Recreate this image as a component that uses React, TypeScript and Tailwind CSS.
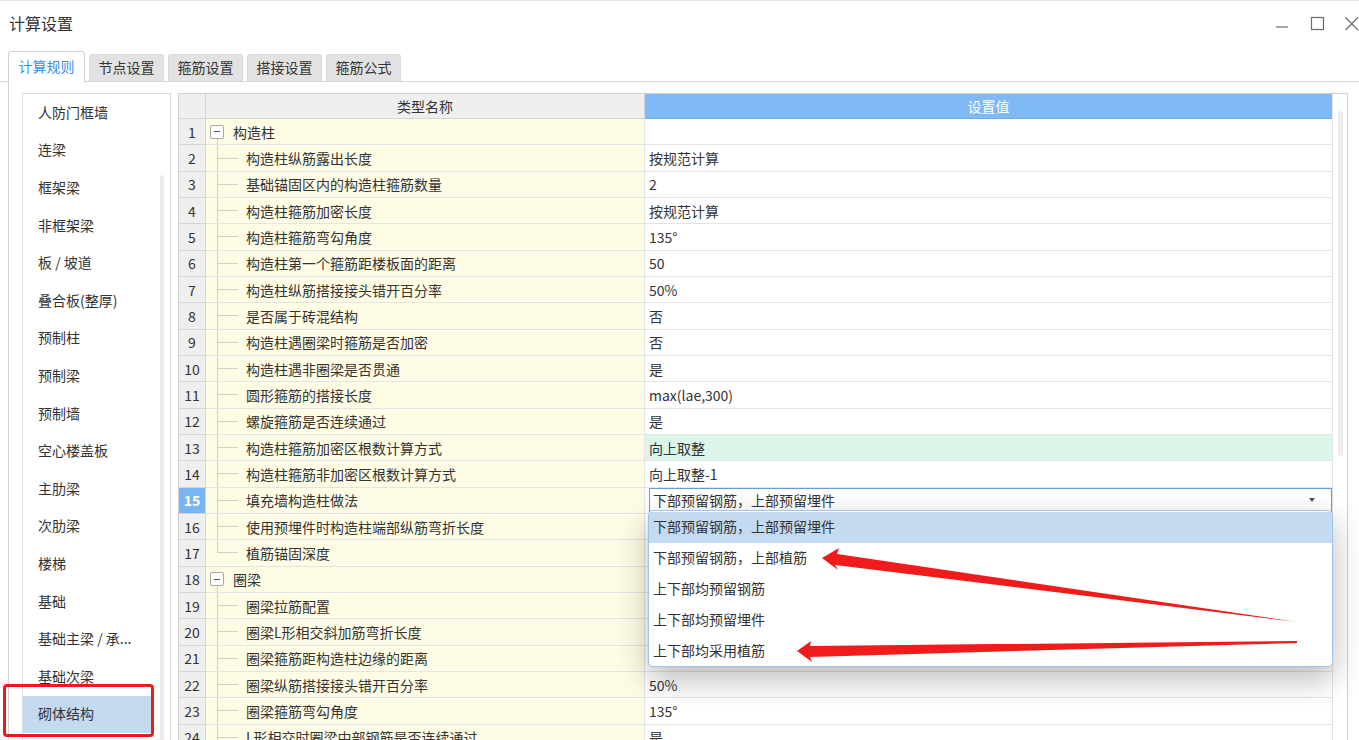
import React from 'react';

type Row = {
  n: number;
  name: string;
  value?: string;
  group?: boolean;
  last?: boolean;
  green?: boolean;
  combo?: boolean;
};

const ROWS: Row[] = [
  { n: 1, name: '构造柱', group: true, value: '' },
  { n: 2, name: '构造柱纵筋露出长度', value: '按规范计算' },
  { n: 3, name: '基础锚固区内的构造柱箍筋数量', value: '2' },
  { n: 4, name: '构造柱箍筋加密长度', value: '按规范计算' },
  { n: 5, name: '构造柱箍筋弯勾角度', value: '135°' },
  { n: 6, name: '构造柱第一个箍筋距楼板面的距离', value: '50' },
  { n: 7, name: '构造柱纵筋搭接接头错开百分率', value: '50%' },
  { n: 8, name: '是否属于砖混结构', value: '否' },
  { n: 9, name: '构造柱遇圈梁时箍筋是否加密', value: '否' },
  { n: 10, name: '构造柱遇非圈梁是否贯通', value: '是' },
  { n: 11, name: '圆形箍筋的搭接长度', value: 'max(lae,300)' },
  { n: 12, name: '螺旋箍筋是否连续通过', value: '是' },
  { n: 13, name: '构造柱箍筋加密区根数计算方式', value: '向上取整', green: true },
  { n: 14, name: '构造柱箍筋非加密区根数计算方式', value: '向上取整-1' },
  { n: 15, name: '填充墙构造柱做法', value: '下部预留钢筋，上部预留埋件', combo: true },
  { n: 16, name: '使用预埋件时构造柱端部纵筋弯折长度', value: '10d' },
  { n: 17, name: '植筋锚固深度', value: '10d', last: true },
  { n: 18, name: '圈梁', group: true, value: '' },
  { n: 19, name: '圈梁拉筋配置', value: '按规范计算' },
  { n: 20, name: '圈梁L形相交斜加筋弯折长度', value: '10*d' },
  { n: 21, name: '圈梁箍筋距构造柱边缘的距离', value: '50' },
  { n: 22, name: '圈梁纵筋搭接接头错开百分率', value: '50%' },
  { n: 23, name: '圈梁箍筋弯勾角度', value: '135°' },
  { n: 24, name: 'L形相交时圈梁中部钢筋是否连续通过', value: '是' },
];

const LIST = [
  '人防门框墙',
  '连梁',
  '框架梁',
  '非框架梁',
  '板 / 坡道',
  '叠合板(整厚)',
  '预制柱',
  '预制梁',
  '预制墙',
  '空心楼盖板',
  '主肋梁',
  '次肋梁',
  '楼梯',
  '基础',
  '基础主梁 / 承...',
  '基础次梁',
  '砌体结构',
];

const TABS = ['计算规则', '节点设置', '箍筋设置', '搭接设置', '箍筋公式'];

const OPTIONS = ['下部预留钢筋，上部预留埋件', '下部预留钢筋，上部植筋', '上下部均预留钢筋', '上下部均预留埋件', '上下部均采用植筋'];

function NameCell({ row }: { row: Row }) {
  if (row.group) {
    return (
      <div className="flex items-stretch h-full pl-[4px]">
        <div className="w-[14px] flex flex-col items-center">
          <div className="flex-1" />
          <div className="w-[14px] h-[14px] border border-[#a9a9a9] rounded-[2px] bg-white flex items-center justify-center">
            <div className="w-[6px] h-px bg-[#555]" />
          </div>
          <div className="flex-1 w-0 border-l border-[#cfcfcf]" />
        </div>
        <div className="ml-[9px] flex items-center">{row.name}</div>
      </div>
    );
  }
  return (
    <div className="flex items-stretch h-full pl-[11px]">
      <div className="w-[21px] flex flex-col">
        <div className="flex-1 border-l border-b border-[#cfcfcf]" />
        <div className={row.last ? 'flex-1' : 'flex-1 border-l border-[#cfcfcf]'} />
      </div>
      <div className="ml-[8px] flex items-center">{row.name}</div>
    </div>
  );
}

function GridRow({ row }: { row: Row }) {
  const sel = row.combo;
  return (
    <div className="flex h-[26.33px]">
      <div
        className={
          sel
            ? 'w-[27px] shrink-0 bg-[#78b5f5] text-white font-bold border-r border-b border-[#d4d4d4] flex items-center justify-center'
            : 'w-[27px] shrink-0 bg-[#efefef] border-r border-b border-[#d4d4d4] flex items-center justify-center'
        }
      >
        {row.n}
      </div>
      <div className="w-[439px] shrink-0 bg-[#fffce6] border-r border-b border-[#e4e4e4]">
        <NameCell row={row} />
      </div>
      <div
        className={
          row.green
            ? 'flex-1 bg-[#dcf5e9] border-b border-[#e4e4e4] flex items-center pl-[4px]'
            : 'flex-1 bg-white border-b border-[#e4e4e4] flex items-center pl-[4px]'
        }
      >
        {sel ? (
          <div className="w-full h-full border border-[#5c9fe6] flex items-center pl-[3px] pr-[16px] justify-between bg-white">
            <span>{row.value}</span>
            <svg width="6" height="4" viewBox="0 0 6 4">
              <path d="M0 0 L6 0 L3 4 Z" fill="#555" />
            </svg>
          </div>
        ) : (
          row.value
        )}
      </div>
    </div>
  );
}

export default function App() {
  return (
    <div className="w-[1359px] h-[740px] overflow-hidden bg-white relative border-t border-[#e6e6e6] text-[14px] text-[#333] leading-none font-['Microsoft_YaHei','Noto_Sans_CJK_SC',sans-serif]">
      {/* title bar */}
      <div className="h-[48px] flex items-center justify-between pl-[9px]">
        <div className="text-[16px] text-[#333] pb-[4px]">计算设置</div>
        <svg width="90" height="48" viewBox="0 0 90 48">
          <line x1="7" y1="26" x2="19" y2="26" stroke="#6b6b6b" strokeWidth="1.2" />
          <rect x="42.5" y="16.5" width="12" height="12" fill="none" stroke="#6b6b6b" strokeWidth="1.2" />
          <path d="M76.5 16.5 L89 29 M89 16.5 L76.5 29" stroke="#6b6b6b" strokeWidth="1.2" />
        </svg>
      </div>

      {/* tabs */}
      <div className="h-[33px] flex items-end pl-[8px] gap-[4px] border-b border-[#d6d6d6]">
        {TABS.map((t, i) =>
          i === 0 ? (
            <div
              key={t}
              className="w-[77px] h-[31px] -mb-px bg-white border border-b-0 border-[#d0d0d0] rounded-t-[3px] flex items-center justify-center pb-[3px] text-[#3b8ee4]"
            >
              {t}
            </div>
          ) : (
            <div
              key={t}
              className="w-[75px] h-[27px] bg-[#e2e2e2] border border-b-0 border-[#dadada] rounded-t-[3px] flex items-center justify-center pb-[3px] text-[#333]"
            >
              {t}
            </div>
          )
        )}
      </div>

      {/* content */}
      <div className="ml-[8px] border-l border-[#d6d6d6] h-[700px] flex gap-[7px] pl-[13px] pt-[11px]">
        {/* left list */}
        <div className="w-[149px] h-[700px] border border-[#dcdcdc] flex shrink-0">
          <div className="w-[128px] flex flex-col">
            {LIST.map((l, i) => (
              <div
                key={l}
                className={
                  i === LIST.length - 1
                    ? 'h-[37.6px] shrink-0 flex items-center pl-[15px] pb-[2px] bg-[#c4daf1]'
                    : 'h-[37.6px] shrink-0 flex items-center pl-[15px] pb-[2px]'
                }
              >
                {l}
              </div>
            ))}
          </div>
          <div className="flex-1 flex justify-center pt-[81px] pl-[3px]">
            <div className="w-[4px] h-[620px] bg-[#ececec] rounded-full" />
          </div>
        </div>

        {/* grid */}
        <div className="relative w-[1170px] h-[700px] border border-[#d0d0d0] flex">
          <div className="flex-1 flex flex-col">
            <div className="flex h-[25px] shrink-0">
              <div className="w-[27px] bg-[#efefef] border-r border-b border-[#d4d4d4]" />
              <div className="w-[439px] bg-[#efefef] border-r border-b border-[#d4d4d4] flex items-center justify-center">类型名称</div>
              <div className="flex-1 bg-[#7fbaf7] border-b border-[#6eaef0] flex items-center justify-center text-white">设置值</div>
            </div>
            {ROWS.map(r => (
              <GridRow key={r.n} row={r} />
            ))}
          </div>
          <div className="w-[15px] shrink-0 bg-white border-l border-[#e2e2e2] flex justify-center pt-[17px]">
            <div className="w-[5px] h-[345px] bg-[#ececec] rounded-full" />
          </div>

          {/* dropdown */}
          <div className="absolute left-[469px] top-[416px] w-[685px] h-[157px] bg-white border border-[#9cc3ea] rounded-[5px] shadow-[0_12px_32px_rgba(0,0,0,0.28)] flex flex-col py-px overflow-hidden">
            {OPTIONS.map((o, i) => (
              <div
                key={o}
                className={
                  i === 0
                    ? 'h-[31px] shrink-0 flex items-center pl-[4px] pb-[4px] bg-[#c3daf1]'
                    : 'h-[31px] shrink-0 flex items-center pl-[4px] pb-[4px]'
                }
              >
                {o}
              </div>
            ))}
          </div>
        </div>
      </div>

      {/* selection highlight box */}
      <div className="absolute left-[3px] top-[683px] w-[151px] h-[53px] border-[3px] border-[#f01818] rounded-[4px]" />

      {/* red arrows */}
      <svg className="absolute left-0 top-0 pointer-events-none" width="1359" height="740">
        <polygon points="822,557 839,547 837,553 1297,621 835,564 838,569" fill="#f01c1c" />
        <polygon points="797,650 811,640 810,645 1297,640 1297,642 810,656 812,661" fill="#f01c1c" />
      </svg>
    </div>
  );
}
